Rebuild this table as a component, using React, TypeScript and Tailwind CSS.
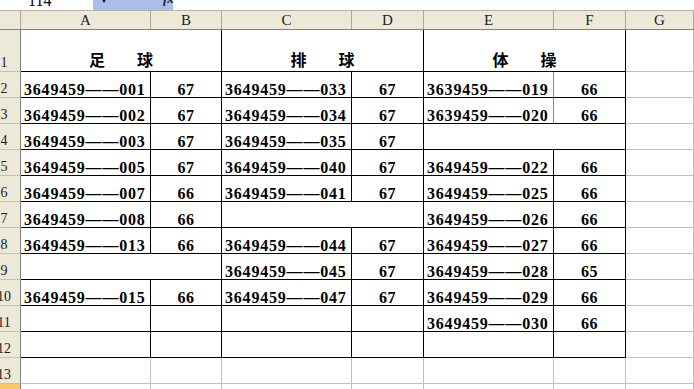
import React from "react";

type Cell = { span?: number; text?: string; kind?: "id" | "score" | "title"; gray?: boolean; rb?: string };

const id = (t: string): Cell => ({ text: t, kind: "id" });
const sc = (t: string): Cell => ({ text: t, kind: "score" });
const blank = (span = 1): Cell => ({ span });

const D = "——";

const rows: Cell[][] = [
  [
    { span: 2, text: "足　　球", kind: "title" },
    { span: 2, text: "排　　球", kind: "title" },
    { span: 2, text: "体　　操", kind: "title" },
  ],
  [id(`3649459${D}001`), sc("67"), id(`3649459${D}033`), sc("67"), { ...id(`3639459${D}019`), rb: "border-r-[#8a8a8a]" }, sc("66")],
  [id(`3649459${D}002`), sc("67"), id(`3649459${D}034`), sc("67"), { ...id(`3639459${D}020`), rb: "border-r-[#8a8a8a]" }, sc("66")],
  [id(`3649459${D}003`), sc("67"), id(`3649459${D}035`), sc("67"), blank(2)],
  [id(`3649459${D}005`), sc("67"), id(`3649459${D}040`), sc("67"), id(`3649459${D}022`), sc("66")],
  [id(`3649459${D}007`), sc("66"), id(`3649459${D}041`), sc("67"), id(`3649459${D}025`), sc("66")],
  [id(`3649459${D}008`), sc("66"), blank(2), id(`3649459${D}026`), sc("66")],
  [id(`3649459${D}013`), sc("66"), id(`3649459${D}044`), sc("67"), id(`3649459${D}027`), sc("66")],
  [blank(2), id(`3649459${D}045`), sc("67"), id(`3649459${D}028`), sc("65")],
  [id(`3649459${D}015`), sc("66"), id(`3649459${D}047`), sc("67"), id(`3649459${D}029`), sc("66")],
  [blank(), blank(), blank(), blank(), id(`3649459${D}030`), sc("66")],
  [blank(), blank(), blank(), blank(), blank(), blank()],
];

const letters = ["A", "B", "C", "D", "E", "F", "G"];

function RowHead({ n, h, active }: { n: string; h: string; active?: boolean }) {
  return (
    <div
      className={`${h} overflow-hidden border-r border-b border-r-[#808080] border-b-[#c5c2b2] flex items-end ${
        active ? "bg-[#f8c76a]" : "bg-[#ece9d8]"
      }`}
    >
      <div className="-ml-[6px] w-[20px] shrink-0 text-center text-[14px] leading-[14px] pb-[1px] text-[#222] font-['Liberation_Serif',serif]">
        {n}
      </div>
    </div>
  );
}

function DataCell({ c, h, last }: { c: Cell; h: string; last?: boolean }) {
  const span = c.span === 2 ? "col-span-2" : "";
  const bc = last ? "border-[#c0c0c0]" : "border-black";
  const base = `${span} ${h} border-r border-b ${bc} ${c.rb ?? ""} flex items-end overflow-hidden bg-white`;
  if (c.kind === "title") {
    return (
      <div className={`${base} justify-center pb-[3px]`}>
        <span className="text-[16px] leading-[18px] font-bold text-black font-['Noto_Sans_CJK_SC',sans-serif]">{c.text}</span>
      </div>
    );
  }
  if (c.kind === "id") {
    return (
      <div className={`${base} pl-[3px]`}>
        <span className="whitespace-nowrap text-[16px] leading-[15px] font-bold tracking-[0.8px] text-black font-['Liberation_Serif',serif]">
          {c.text}
        </span>
      </div>
    );
  }
  if (c.kind === "score") {
    return (
      <div className={`${base} justify-center`}>
        <span className="text-[16px] leading-[15px] font-bold tracking-[0.6px] text-black font-['Liberation_Serif',serif]">{c.text}</span>
      </div>
    );
  }
  return <div className={base} />;
}

const gridCols = "grid grid-cols-[21px_130px_71px_130px_72px_130px_72px_1fr]";

export default function App() {
  return (
    <div className="w-[694px] h-[389px] overflow-hidden bg-white">
      {/* formula bar, scrolled so only its bottom edge shows */}
      <div className="h-[11px] flex overflow-hidden border-b border-[#b4b1a4] bg-white">
        <div className="w-[93px] shrink-0 pl-[28px]">
          <div className="-mt-[7px] text-[16px] leading-[16px] text-black font-['Liberation_Serif',serif]">114</div>
        </div>
        <div className="w-[80px] shrink-0 bg-[#a9bdee] flex">
          <div className="ml-[7px] -mt-[4px] w-0 h-0 border-l-[4px] border-r-[4px] border-t-[7px] border-l-transparent border-r-transparent border-t-[#111]" />
          <div className="ml-[55px] -mt-[8px] text-[13px] leading-[13px] italic font-bold text-[#222] font-['Liberation_Serif',serif]">fx</div>
        </div>
      </div>

      {/* column headers */}
      <div className={`${gridCols} h-[19px] bg-[#ece9d8] border-b border-[#808080]`}>
        <div className="border-r border-[#aca899]" />
        {letters.map((l) => (
          <div
            key={l}
            className="border-r border-[#aca899] flex items-center justify-center text-[15px] leading-[15px] text-[#222] font-['Liberation_Serif',serif]"
          >
            {l}
          </div>
        ))}
      </div>

      {/* sheet rows */}
      <div className={gridCols}>
        {rows.map((r, i) => {
          const h = i === 0 ? "h-[42px]" : "h-[26px]";
          return (
            <React.Fragment key={i}>
              <RowHead n={String(i + 1)} h={h} />
              {r.map((c, j) => (
                <DataCell key={j} c={c} h={h} />
              ))}
              <div className={`${h} border-r border-b border-[#c0c0c0]`} />
            </React.Fragment>
          );
        })}
        <RowHead n="13" h="h-[26px]" />
        {[0, 1, 2, 3, 4, 5].map((j) => (
          <DataCell key={j} c={blank()} h="h-[26px]" last />
        ))}
        <div className="h-[26px] border-r border-b border-[#c0c0c0]" />
        <RowHead n="14" h="h-[26px]" active />
        {[0, 1, 2, 3, 4, 5, 6].map((j) => (
          <div key={j} className="h-[26px] border-r border-[#c0c0c0]" />
        ))}
      </div>
    </div>
  );
}
